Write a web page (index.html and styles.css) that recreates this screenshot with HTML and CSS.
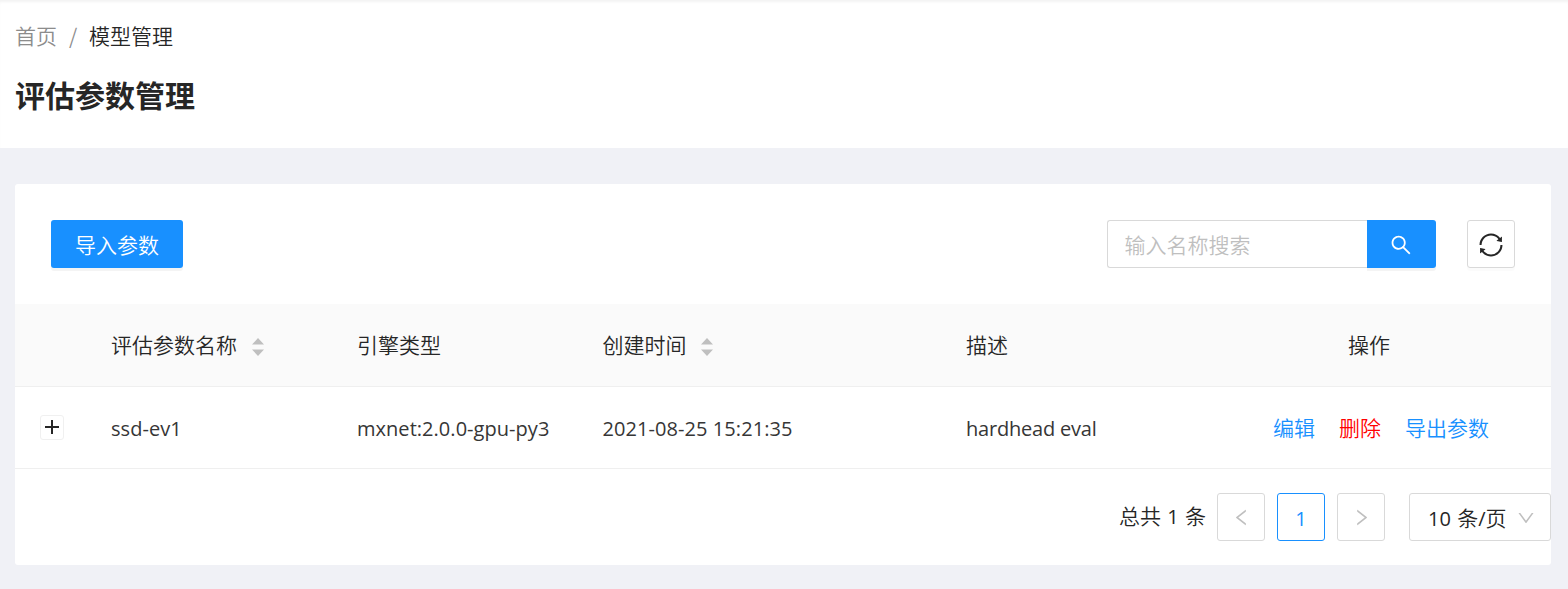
FILE: index.html
```html
<!DOCTYPE html>
<html lang="zh-CN">
<head>
<meta charset="utf-8">
<title>评估参数管理</title>
<link rel="stylesheet" href="styles.css">
</head>
<body>
<header class="page-header">
  <nav class="breadcrumb"><a class="crumb">首页</a><span class="slash">/</span><span class="crumb-current">模型管理</span></nav>
  <h1 class="title">评估参数管理</h1>
</header>
<main class="card">
  <div class="toolbar">
    <button class="btn-primary">导入参数</button>
    <div class="tools">
      <div class="search">
        <input class="search-input" type="text" placeholder="输入名称搜索">
        <button class="search-btn"><svg width="24" height="24" viewBox="0 0 1024 1024" fill="currentColor"><path d="M909.6 854.5L649.9 594.8C690.2 542.7 712 479 712 412c0-80.2-31.3-155.4-87.9-212.1-56.6-56.7-132-87.9-212.1-87.9s-155.5 31.3-212.1 87.9C143.2 256.5 112 331.8 112 412c0 80.1 31.3 155.5 87.9 212.1C256.5 680.8 331.8 712 412 712c67 0 130.6-21.8 182.7-62l259.7 259.6a8.2 8.2 0 0011.6 0l43.6-43.5a8.2 8.2 0 000-11.6zM570.4 570.4C528 612.7 471.8 636 412 636s-116-23.3-158.4-65.6C211.3 528 188 471.8 188 412s23.3-116.1 65.6-158.4C296 211.3 352.2 188 412 188s116.1 23.2 158.4 65.6S636 352.2 636 412s-23.3 116.1-65.6 158.4z"/></svg></button>
      </div>
      <button class="refresh"><svg width="28" height="28" viewBox="0 0 1024 1024" fill="currentColor"><path d="M168 504.2c1-43.7 10-86.1 26.9-126 17.3-41 42.1-77.7 73.7-109.4S337 212.3 378 195c42.4-17.9 87.4-27 133.9-27s91.5 9.1 133.8 27A341.5 341.5 0 01755 268.8c9.9 9.9 19.2 20.4 27.8 31.4l-60.2 47a8 8 0 003 14.1l175.7 43c5 1.2 9.9-2.6 9.9-7.7l.8-180.9c0-6.7-7.7-10.5-12.9-6.3l-56.4 44.1C765.8 155.1 646.2 92 511.8 92 282.7 92 96.3 275.6 92 503.8a8 8 0 008 8.2h60c4.4 0 7.9-3.5 8-7.8zm756 7.8h-60c-4.4 0-7.9 3.5-8 7.8-1 43.7-10 86.1-26.9 126-17.3 41-42.1 77.8-73.7 109.4A342.45 342.45 0 01512.1 856a342.24 342.24 0 01-243.2-100.8c-9.9-9.9-19.2-20.4-27.8-31.4l60.2-47a8 8 0 00-3-14.1l-175.7-43c-5-1.2-9.9 2.6-9.9 7.7l-.7 181c0 6.7 7.7 10.5 12.9 6.3l56.4-44.1C258.2 868.9 377.8 932 512.2 932c229.2 0 415.5-183.7 419.8-411.8a8 8 0 00-8-8.2z"/></svg></button>
    </div>
  </div>
  <div class="row row-head">
    <div class="cell"></div>
    <div class="cell">评估参数名称<svg class="sorter" width="12" height="18" viewBox="0 0 12 18" fill="currentColor"><path d="M6 0L12 6.6H0zM0 11.5H12L6 18z"/></svg></div>
    <div class="cell">引擎类型</div>
    <div class="cell">创建时间<svg class="sorter" width="12" height="18" viewBox="0 0 12 18" fill="currentColor"><path d="M6 0L12 6.6H0zM0 11.5H12L6 18z"/></svg></div>
    <div class="cell">描述</div>
    <div class="cell cell-center">操作</div>
  </div>
  <div class="row row-body">
    <div class="cell cell-expand"><button class="expand"><svg width="14" height="14" viewBox="0 0 14 14" fill="currentColor"><path d="M6 0H8V6H14V8H8V14H6V8H0V6H6z"/></svg></button></div>
    <div class="cell"><span class="latin">ssd-ev1</span></div>
    <div class="cell"><span class="latin">mxnet:2.0.0-gpu-py3</span></div>
    <div class="cell"><span class="latin latin-date">2021-08-25 15:21:35</span></div>
    <div class="cell"><span class="latin latin-desc">hardhead eval</span></div>
    <div class="cell cell-center"><a class="action">编辑</a><a class="action danger">删除</a><a class="action">导出参数</a></div>
  </div>
  <div class="pagination">
    <span class="total">总共<span class="latin spaced"> 1 </span>条</span>
    <button class="page"><svg width="21" height="21" viewBox="0 0 1024 1024" fill="currentColor"><path d="M724 218.3V141c0-6.7-7.7-10.4-12.9-6.3L260.3 486.8a31.86 31.86 0 000 50.3l450.8 352.1c5.3 4.1 12.9.4 12.9-6.3v-77.3c0-4.9-2.3-9.6-6.1-12.6l-360-281 360-281.1c3.8-3 6.1-7.7 6.1-12.6z"/></svg></button>
    <button class="page page-active"><span class="latin">1</span></button>
    <button class="page"><svg width="21" height="21" viewBox="0 0 1024 1024" fill="currentColor"><path d="M765.7 486.8L314.9 134.7A7.97 7.97 0 00302 141v77.3c0 4.9 2.3 9.6 6.1 12.6l360 281.1-360 281.1c-3.9 3-6.1 7.7-6.1 12.6V883c0 6.7 7.7 10.4 12.9 6.3l450.8-352.1a31.96 31.96 0 000-50.4z"/></svg></button>
    <div class="size-select"><span class="size-text"><span class="latin">10 </span>条<span class="latin">/</span>页</span><svg width="20" height="20" viewBox="0 0 1024 1024" fill="currentColor"><path d="M884 256h-75c-5.1 0-9.9 2.5-12.9 6.6L512 654.2 227.9 262.6c-3-4.1-7.8-6.6-12.9-6.6h-75c-6.5 0-10.3 7.4-6.5 12.7l352.6 486.1c12.8 17.6 39 17.6 51.7 0l352.6-486.1c3.9-5.3.1-12.7-6.4-12.7z"/></svg></div>
  </div>
</main>
</body>
</html>
```

FILE: styles.css
```css
* { box-sizing: border-box; }
body {
  margin: 0;
  height: 589px;
  background: #f0f1f6;
  color: #262626;
  font: 350 21px/33px "Noto Sans CJK SC", sans-serif;
}
button, input { font: inherit; margin: 0; padding: 0; }
svg { display: block; flex: none; }
.latin {
  font-family: "Open Sans", "Noto Sans CJK SC", sans-serif;
  font-weight: 400;
  font-size: 20px;
  letter-spacing: 0.04px;
}
.cell .latin { color: #363636; }
.latin-date { letter-spacing: 0.07px; }
.latin-desc { letter-spacing: -0.2px; }
.spaced { word-spacing: 1px; }
.page-header {
  height: 148px;
  padding: 19px 15px 0;
  background: #fff;
  box-shadow: inset 0 3px 3px -1px #f3f3f3;
}
.breadcrumb { display: flex; height: 33px; }
.crumb { color: #8c8c8c; }
.slash { width: 32px; text-align: center; color: #8c8c8c; }
.title { margin: 18px 0 0; font-size: 30px; line-height: 48px; font-weight: 700; }
.card {
  margin: 36px 17px 0 15px;
  height: 381px;
  background: #fff;
  border-radius: 3px;
}
.toolbar {
  display: flex;
  justify-content: space-between;
  height: 120px;
  padding: 36px 36px 0;
}
.btn-primary {
  width: 132px;
  height: 48px;
  border: 0;
  border-radius: 3px;
  background: #1890ff;
  color: #fff;
  box-shadow: 0 3px 0 rgba(0,0,0,.045);
}
.tools { display: flex; gap: 31px; }
.search { display: flex; height: 48px; }
.search-input {
  width: 260px;
  padding: 1px 16.5px 0;
  border: 1px solid #d9d9d9;
  border-right: 0;
  border-radius: 3px 0 0 3px;
  background: #fff;
  outline: 0;
}
.search-input::placeholder { color: #bfbfbf; opacity: 1; }
.search-btn {
  display: flex;
  align-items: center;
  justify-content: center;
  width: 69px;
  padding: 1px 1px 0 0;
  border: 0;
  border-radius: 0 3px 3px 0;
  background: #1890ff;
  color: #fff;
  box-shadow: 0 3px 0 rgba(0,0,0,.045);
}
.refresh {
  display: flex;
  align-items: center;
  justify-content: center;
  width: 48px;
  height: 48px;
  padding-top: 2px;
  border: 1px solid #d9d9d9;
  border-radius: 3px;
  background: #fff;
  color: #262626;
  box-shadow: 0 3px 0 rgba(0,0,0,.016);
}
.row {
  display: grid;
  grid-template-columns: 72px 246px 245.5px 363.5px 245px 364px;
  border-bottom: 1px solid #efefef;
}
.row-head { height: 83px; background: #fafafa; }
.row-head .cell { padding-bottom: 2px; }
.row-body { height: 82px; }
.cell { display: flex; align-items: center; padding: 0 24px; white-space: nowrap; }
.cell > .latin { padding-top: 2px; }
.cell-center { justify-content: center; }
.cell-expand { padding: 0 0 0 2px; justify-content: center; }
.sorter { margin: 5px 0 0 14.5px; color: #bfbfbf; }
.expand {
  display: flex;
  align-items: center;
  justify-content: center;
  width: 24px;
  height: 25px;
  padding: 0 1px 1px 0;
  border: 1px solid #f0f0f0;
  border-radius: 3px;
  background: #fff;
  color: #262626;
}
.action { margin-left: 24px; color: #1890ff; }
.danger { color: #f00; }
.pagination { display: flex; justify-content: flex-end; padding-top: 24px; }
.total { margin-right: 11px; line-height: 45px; }
.page {
  display: flex;
  align-items: center;
  justify-content: center;
  width: 48px;
  height: 48px;
  margin-right: 12px;
  border: 1px solid #d9d9d9;
  border-radius: 3px;
  background: #fff;
  color: #bfbfbf;
}
.page-active { padding-top: 2px; border-color: #1890ff; color: #1890ff; }
.size-select {
  display: flex;
  align-items: center;
  justify-content: space-between;
  width: 142px;
  height: 48px;
  margin-left: 12px;
  padding: 1px 14px 0 18px;
  border: 1px solid #d9d9d9;
  border-radius: 3px;
}
.size-text { padding-top: 1px; white-space: nowrap; word-spacing: 1px; }
.size-select svg { color: #bfbfbf; }
```
